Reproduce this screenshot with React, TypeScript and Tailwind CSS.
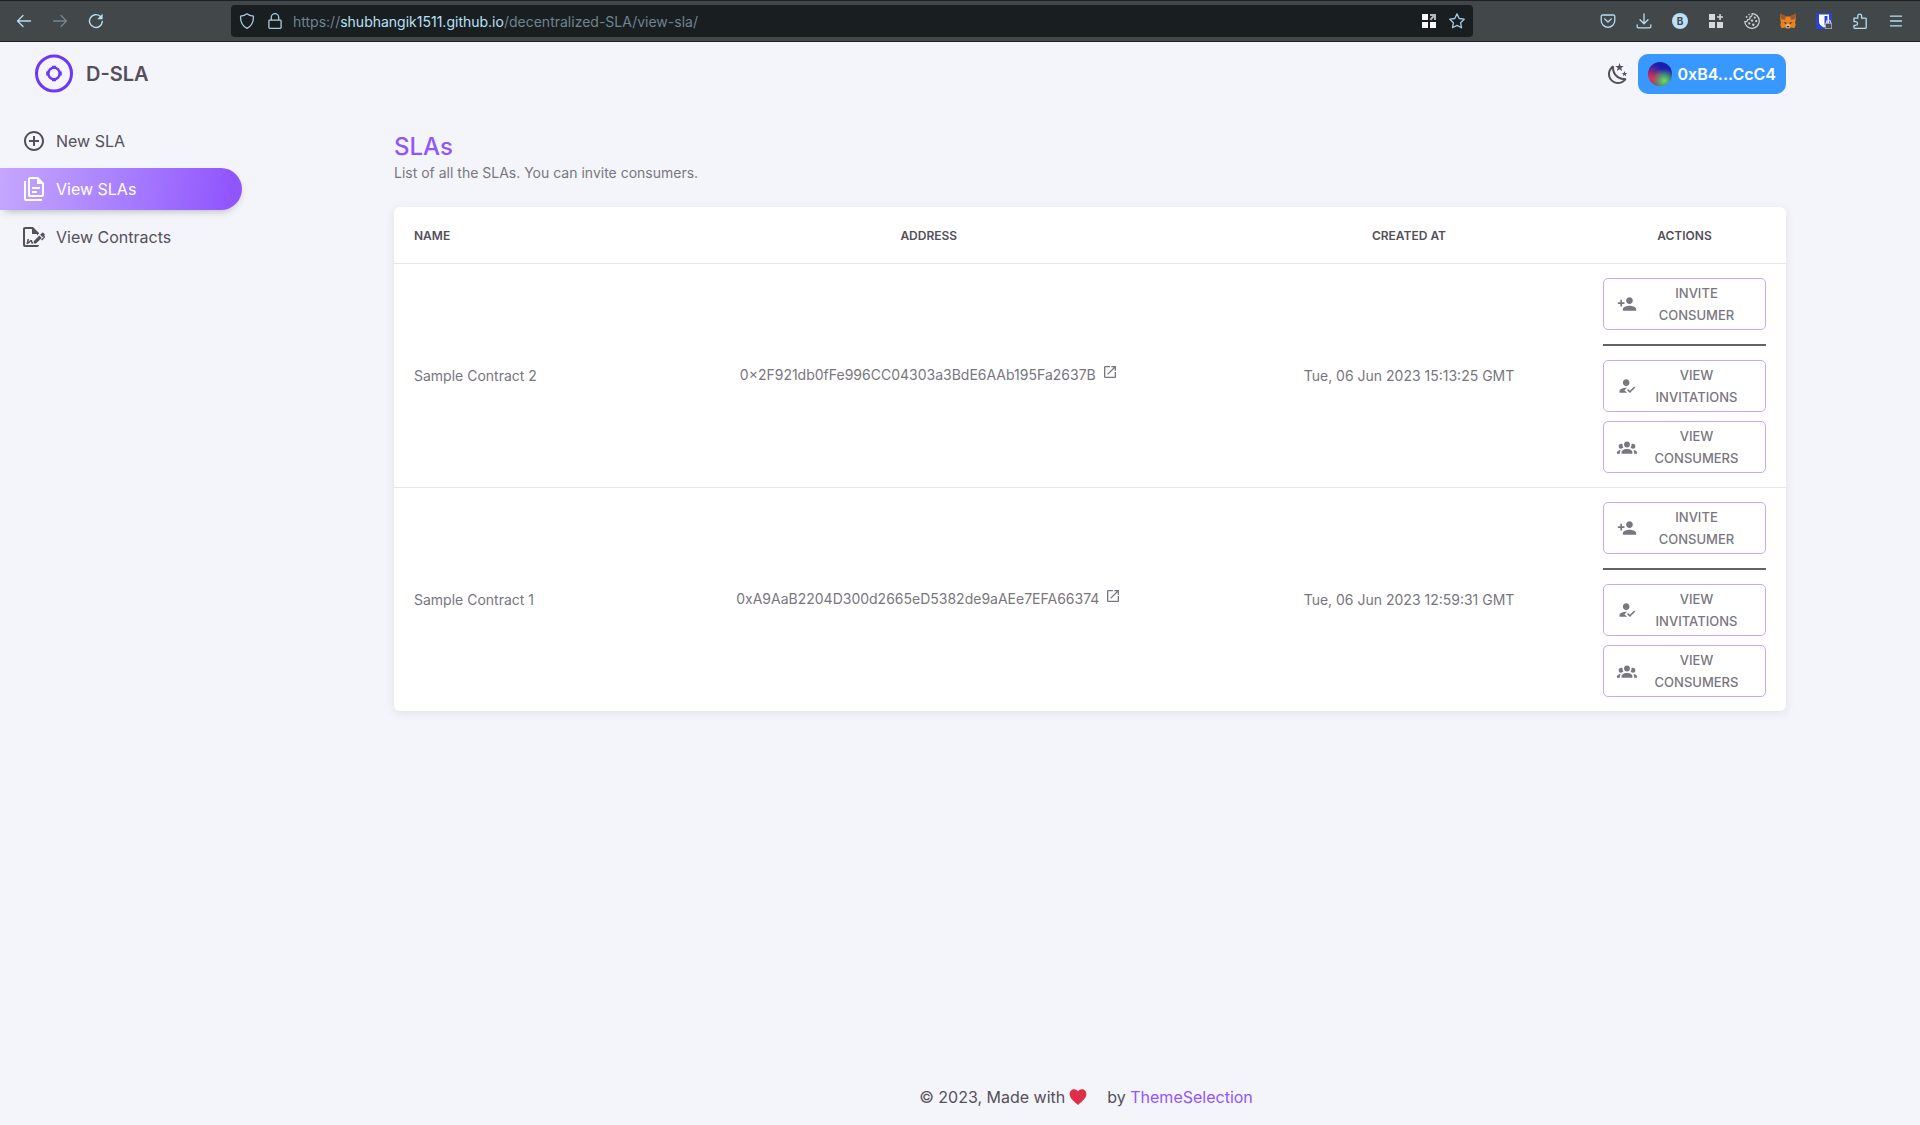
import type { ReactNode } from "react";
import { MdAddCircleOutline, MdHowToReg, MdOpenInNew, MdPersonAdd } from "react-icons/md";

function Svg({ children, size = 24, box = "0 0 24 24", className = "" }: { children: ReactNode; size?: number; box?: string; className?: string }) {
  return (
    <svg width={size} height={size} viewBox={box} fill="none" className={className} aria-hidden="true">
      {children}
    </svg>
  );
}

function Line({ d, className = "" }: { d: string; className?: string }) {
  return (
    <Svg size={16} box="0 0 16 16" className={className}>
      <path d={d} stroke="currentColor" strokeWidth="1.3" strokeLinecap="round" strokeLinejoin="round" />
    </Svg>
  );
}

function BarButton({ label, children, className = "" }: { label: string; children: ReactNode; className?: string }) {
  return (
    <button type="button" aria-label={label} className={`flex h-8 w-9 shrink-0 items-center justify-center ${className}`}>
      {children}
    </button>
  );
}

function BrowserBar() {
  return (
    <header className="flex h-[42px] shrink-0 items-center border-y border-[#1b2024] bg-[#42474a] text-[#b9def2]">
      <div className="flex w-[231px] shrink-0 pl-1.5">
        <BarButton label="Back"><Line d="M1.5 8h13M7 2.500 1.500 8 7 13.500" /></BarButton>
        <BarButton label="Forward" className="text-[#74858e]"><Line d="M14.500 8h-13M9 2.500 14.500 8 9 13.500" /></BarButton>
        <BarButton label="Reload">
          <Svg size={16} box="0 0 16 16">
            <path d="M14.300 8.500A6.400 6.400 0 1 1 12.200 3.300" stroke="currentColor" strokeWidth="1.4" strokeLinecap="round" />
            <path d="M14.600 .8v5.400H9.200z" fill="currentColor" />
          </Svg>
        </BarButton>
      </div>
      <div className="flex h-8 min-w-0 flex-1 items-center rounded-sm bg-[#191e21] pl-2 pr-0.5 text-[#a6cbe0]">
        <Line d="M8 .8c2 1.600 4 2.100 6.400 2.400C14.700 9 13 13 8 15.300 3 13 1.300 9 1.600 3.200 4 2.900 6 2.400 8 .8z" />
        <span className="ml-3 flex"><Line d="M2.700 7.200h10.600a.8.8 0 0 1 .8.8v6.500a.8.8 0 0 1-.8.8H2.700a.8.8 0 0 1-.8-.8V8a.8.8 0 0 1 .8-.8zM4.300 7V4.300a3.700 3.700 0 0 1 7.400 0V7" /></span>
        <div className="ml-2.5 min-w-0 flex-1 truncate font-[Inter,sans-serif] text-[14px] text-[#70848f]">
          https://<span className="text-[#b9e2f8]">shubhangik1511.github.io</span>/decentralized-SLA/view-sla/
        </div>
        <button type="button" aria-label="Open in container" className="flex w-7 justify-center">
          <Svg size={16} box="0 0 16 16">
            <path d="M1 1h6v6H1zM1 9h6v6H1zM9 9h6v6H9z" fill="#fff" />
            <path d="M9 1h6v6h-2V4.500L10 7.500 8.500 6l3-3H9z" fill="#b5b8ba" />
          </Svg>
        </button>
        <button type="button" aria-label="Bookmark" className="flex w-7 justify-center">
          <Line d="m8 .9 2.200 4.600 5 .7-3.600 3.500.9 5.100L8 12.400l-4.500 2.400.9-5.100L.8 6.200l5-.7z" />
        </button>
      </div>
      <div className="flex w-[447px] shrink-0 justify-end pr-1.5">
        <BarButton label="Save to Pocket">
          <Line d="M2.500 2h11a1.300 1.300 0 0 1 1.300 1.300v4.200a6.800 6.800 0 0 1-13.600 0V3.300A1.300 1.300 0 0 1 2.500 2zM4.800 6 8 9.100 11.200 6" />
        </BarButton>
        <BarButton label="Downloads"><Line d="M8 .8v9.700M4 6.700l4 4 4-4M1.200 12v1.600a1.200 1.200 0 0 0 1.200 1.200h11.200a1.200 1.200 0 0 0 1.200-1.200V12" /></BarButton>
        <BarButton label="Account">
          <span className="flex size-4 items-center justify-center rounded-full bg-[#b9e2f8] text-[10px] font-bold text-[#42474a]">B</span>
        </BarButton>
        <BarButton label="Widgets">
          <Svg size={16} box="0 0 16 16">
            <path d="M1 1h6v6H1zM1 9h6v6H1zM9 9h6v6H9zM11.300 1h1.500v2.200H15v1.500h-2.200V7h-1.500V4.700H9V3.200h2.300z" fill="#d6d8d9" />
          </Svg>
        </BarButton>
        <BarButton label="Cookies">
          <Svg size={16} box="0 0 16 16">
            <path d="M8 .7a7.300 7.300 0 1 1-7.300 7.800c1.500.6 3-.2 2.800-1.800C5.500 6.900 6.500 5.500 5.800 4 7.500 3.800 8.500 2.500 8 .7z" stroke="#cfd2d3" strokeWidth="1.200" strokeLinejoin="round" />
            <g fill="#cfd2d3">
              <circle cx="10.800" cy="4.600" r="1.100" />
              <circle cx="8" cy="7.600" r="1.200" />
              <circle cx="12.200" cy="8.200" r="1.100" />
              <circle cx="5.300" cy="10.400" r="1.100" />
              <circle cx="9.300" cy="11.700" r="1.200" />
              <circle cx="2.600" cy="4" r=".9" />
              <circle cx="5" cy="1.600" r=".8" />
            </g>
          </Svg>
        </BarButton>
        <BarButton label="MetaMask">
          <Svg size={16} box="0 0 16 16">
            <path d="M.6.8 6 3.500h4L15.400.8l.4 4.700-.7 4.200.6 2.600-1.400 2.900-3.300-.8L9.500 15.500h-3L5 14.400l-3.300.8L.3 12.300l.6-2.600L.2 5.500z" fill="#e8821e" />
            <path d="M.6.8 6 3.500 4.800 7 .9 6zM15.400.8 10 3.500 11.200 7l3.900-1z" fill="#a1552b" />
            <path d="m3.500 9 3 .8-.4 1.700zM12.500 9l-3 .8.4 1.700z" fill="#3b2a20" />
            <path d="m5.500 12 2.500-.8 2.500.8-.8 3H6.300z" fill="#d9c3ae" />
            <path d="M6.500 13h3l-.5 1.200H7z" fill="#2c2622" />
          </Svg>
        </BarButton>
        <BarButton label="Bitwarden">
          <Svg size={16} box="0 0 16 16">
            <rect width="16" height="16" rx="1" fill="#2a43d8" />
            <path d="M3 1.500h10V9c0 2.500-2.500 4.300-5 5.500C5.500 13.300 3 11.500 3 9z" fill="#fff" />
            <path d="M8.500 3v9.500c1.700-1 3-2.200 3-3.700V3z" fill="#2a43d8" />
            <path d="M10.500 10.500V9a2 2 0 0 1 4 0v1.500" stroke="#d4d4d4" strokeWidth="1.200" />
            <path d="M9.300 10.300h6.400v5.400H9.300z" fill="#4b4f52" stroke="#d4d4d4" strokeWidth=".7" />
          </Svg>
        </BarButton>
        <BarButton label="Extensions">
          <Line d="M2 5.200h3.800V3a1.900 1.900 0 0 1 3.800 0v2.200h3.800a.8.8 0 0 1 .8.800v8.500a.8.8 0 0 1-.8.800H2.800a.8.8 0 0 1-.8-.8v-2.200h1.700a1.800 1.800 0 0 0 0-3.700H2z" />
        </BarButton>
        <BarButton label="Menu"><Line d="M2.500 3.200h11M2.500 8h11M2.500 12.800h11" /></BarButton>
      </div>
    </header>
  );
}

const DOCS =
  "M16 0H8C6.900 0 6 .9 6 2V18C6 19.100 6.900 20 8 20H20C21.100 20 22 19.100 22 18V6L16 0M20 18H8V2H15V7H20V18M4 4V22H20V24H4C2.900 24 2 23.100 2 22V4H4M10 10V12H18V10H10M10 14V16H15V14H10Z";
const SIGN =
  "M19.7 12.9L14 18.6H11.7V16.3L17.4 10.6L19.7 12.9M23.1 12.1C23.1 12.4 22.8 12.7 22.5 13L20 15.5L19.1 14.6L21.7 12L21.1 11.4L20.4 12.1L18.1 9.8L20.3 7.7C20.5 7.5 20.9 7.5 21.2 7.7L22.6 9.1C22.8 9.3 22.8 9.7 22.6 10C22.4 10.2 22.2 10.4 22.2 10.6C22.2 10.8 22.4 11 22.6 11.2C22.9 11.5 23.2 11.8 23.1 12.1M3 20V4H10V9H15V10.5L17 8.5V8L11 2H3C1.9 2 1 2.9 1 4V20C1 21.1 1.9 22 3 22H15C16.1 22 17 21.1 17 20H3M11 17.1C10.8 17.1 10.6 17.2 10.5 17.2L10 15H8.5L6.4 16.7L7 14H5.5L4.5 19H6L8.9 16.4L9.5 18.7H10.5L11 18.6V17.1Z";
const NIGHT =
  "M17.75,4.09L15.22,6.03L16.13,9.09L13.5,7.28L10.87,9.09L11.78,6.03L9.25,4.09L12.44,4L13.5,1L14.56,4L17.75,4.09M21.25,11L19.61,12.25L20.2,14.23L18.5,13.06L16.8,14.23L17.39,12.25L15.75,11L17.81,10.95L18.5,9L19.19,10.95L21.25,11M18.97,15.95C19.8,15.87 20.69,17.05 20.16,17.8C19.84,18.25 19.5,18.67 19.08,19.07C15.17,23 8.84,23 4.94,19.07C1.03,15.17 1.03,8.83 4.94,4.93C5.34,4.53 5.76,4.17 6.21,3.85C6.96,3.32 8.14,4.21 8.06,5.04C7.79,7.9 8.75,10.87 10.95,13.06C13.14,15.26 16.1,16.22 18.97,15.95M17.33,17.97C14.5,17.81 11.7,16.64 9.53,14.5C7.36,12.31 6.2,9.5 6.04,6.68C3.23,9.82 3.34,14.64 6.35,17.66C9.37,20.67 14.19,20.78 17.33,17.97Z";
const GROUP =
  "M12,5.5A3.5,3.5 0 0,1 15.5,9A3.5,3.5 0 0,1 12,12.5A3.5,3.5 0 0,1 8.5,9A3.5,3.5 0 0,1 12,5.5M5,8C5.56,8 6.08,8.15 6.53,8.42C6.38,9.85 6.8,11.27 7.66,12.38C7.16,13.34 6.16,14 5,14A3,3 0 0,1 2,11A3,3 0 0,1 5,8M19,8A3,3 0 0,1 22,11A3,3 0 0,1 19,14C17.84,14 16.84,13.34 16.34,12.38C17.2,11.27 17.62,9.85 17.47,8.42C17.92,8.15 18.44,8 19,8M5.5,18.25C5.5,16.18 8.41,14.5 12,14.5C15.59,14.5 18.5,16.18 18.5,18.25V20H5.5V18.25M0,20V18.5C0,17.11 1.89,15.94 4.45,15.6C3.86,16.28 3.5,17.22 3.5,18.25V20H0M24,20H20.5V18.25C20.5,17.22 20.14,16.28 19.55,15.6C22.11,15.94 24,17.11 24,18.5V20Z";

function NavItem({ icon, label, active = false }: { icon: ReactNode; label: string; active?: boolean }) {
  return (
    <li>
      <a
        href="#"
        aria-current={active ? "page" : undefined}
        className={`flex h-[42px] items-center gap-2.5 rounded-r-full pl-[22px] ${
          active ? "bg-linear-98 from-[#c6a7fe] to-[#9155fd] to-94% text-white shadow-[0_4px_8px_-4px_rgba(58,53,65,0.42)]" : ""
        }`}
      >
        {icon}
        {label}
      </a>
    </li>
  );
}

function Sidebar() {
  return (
    <aside className="w-[260px] shrink-0">
      <a href="#" className="flex h-16 items-center gap-3 pl-[34px] text-xl font-semibold">
        <Svg size={40} box="0 0 40 40">
          <circle cx="20" cy="19.500" r="17.500" stroke="#6b38fb" strokeWidth="3" />
          <circle cx="20" cy="19.500" r="5.700" stroke="#6b38fb" strokeWidth="2.500" />
          <path d="M18 11.700h4v3h-4zM18 24.300h4v3h-4zM12.200 17.500h3v4h-3zM24.800 17.500h3v4h-3z" fill="#6b38fb" />
        </Svg>
        D-SLA
      </a>
      <nav>
        <ul className="flex flex-col gap-1.5 pr-[18px] pt-3.5">
          <NavItem icon={<MdAddCircleOutline size={24} />} label="New SLA" />
          <NavItem active icon={<Svg><path d={DOCS} fill="currentColor" /></Svg>} label="View SLAs" />
          <NavItem icon={<Svg><path d={SIGN} fill="currentColor" /></Svg>} label="View Contracts" />
        </ul>
      </nav>
    </aside>
  );
}

function ActionButton({ icon, label }: { icon: ReactNode; label: string }) {
  return (
    <button
      type="button"
      className="flex h-[52px] w-full items-center gap-1 rounded-[5px] border border-[#c6a7fe] px-[13px] text-[13px] leading-[22px] font-medium uppercase"
    >
      <span className="shrink-0">{icon}</span>
      <span className="min-w-0 flex-1 text-center">{label}</span>
    </button>
  );
}

const rows = [
  { name: "Sample Contract 2", address: "0×2F921db0fFe996CC04303a3BdE6AAb195Fa2637B", created: "Tue, 06 Jun 2023 15:13:25 GMT" },
  { name: "Sample Contract 1", address: "0xA9AaB2204D300d2665eD5382de9aAEe7EFA66374", created: "Tue, 06 Jun 2023 12:59:31 GMT" },
];

function SlaTable() {
  return (
    <div className="overflow-hidden rounded-md bg-white shadow-[0_2px_10px_rgba(58,53,65,0.1)]">
      <table className="w-full table-fixed text-center text-sm text-[#797680]">
        <thead className="text-xs text-[#544f5a] uppercase">
          <tr className="h-14 border-b border-[#e7e6e8]">
            <th scope="col" className="px-5 pt-0.5 text-left font-semibold">Name</th>
            <th scope="col" className="w-[44%] px-5 pt-0.5 font-semibold">Address</th>
            <th scope="col" className="w-[25%] px-5 pt-0.5 font-semibold">Created At</th>
            <th scope="col" className="w-[203px] px-5 pt-0.5 font-semibold">Actions</th>
          </tr>
        </thead>
        <tbody>
          {rows.map((row) => (
            <tr key={row.name} className="border-b border-[#e7e6e8] last:border-b-0">
              <td className="px-5 pt-0.5 text-left">{row.name}</td>
              <td className="px-5 pt-0.5">
                {row.address}
                <a href="#" aria-label="Open in explorer" className="ml-1.5 inline-block pb-2 align-middle">
                  <MdOpenInNew size={16} />
                </a>
              </td>
              <td className="px-5 pt-0.5">{row.created}</td>
              <td className="px-5 py-3.5">
                <ActionButton icon={<MdPersonAdd size={20} />} label="Invite Consumer" />
                <hr className="my-3.5 border-t-2 border-[#656168]" />
                <ActionButton icon={<MdHowToReg size={20} />} label="View Invitations" />
                <div className="h-[9px]" />
                <ActionButton icon={<Svg size={20}><path d={GROUP} fill="currentColor" /></Svg>} label="View Consumers" />
              </td>
            </tr>
          ))}
        </tbody>
      </table>
    </div>
  );
}

export default function App() {
  return (
    <div className="flex min-h-screen flex-col bg-[#f4f5fa] font-[Inter,sans-serif] text-[#544f5a]">
      <BrowserBar />
      <div className="flex flex-1">
        <Sidebar />
        <div className="flex min-w-0 flex-1 justify-center">
          <div className="flex w-full max-w-[1440px] flex-col px-6">
            <div className="flex h-16 items-center justify-end gap-2">
              <button type="button" aria-label="Dark mode">
                <Svg><path d={NIGHT} fill="currentColor" /></Svg>
              </button>
              <button type="button" className="flex h-10 items-center gap-1.5 rounded-[10px] bg-[#3898ff] px-2.5 text-base font-semibold text-white">
                <span className="size-6 rounded-full bg-[radial-gradient(circle_at_68%_78%,#68e15a_0%,transparent_50%),radial-gradient(circle_at_10%_70%,#f0304a_0%,transparent_55%),linear-gradient(#1a1fb0_35%,#2a3f8f)]" />
                0xB4...CcC4
              </button>
            </div>
            <main className="flex-1 pt-[25px]">
              <h1 className="text-2xl leading-8 font-medium text-[#9155fd]">SLAs</h1>
              <p className="mb-6 text-sm leading-5 text-[#797680]">List of all the SLAs. You can invite consumers.</p>
              <SlaTable />
            </main>
            <footer className="flex h-14 items-center justify-center pr-2">
              <span>© 2023, Made with</span>
              <Svg size={18} className="mx-1">
                <path d="M12 22.500C6 17.500.8 13 .8 7.900.8 4.300 3.500 1.500 6.800 1.500c2.100 0 4 1.100 5.200 2.900 1.200-1.800 3.100-2.900 5.200-2.900 3.300 0 6 2.800 6 6.400 0 5.100-5.200 9.600-11.200 14.600z" fill="#df2e46" />
              </Svg>
              <span className="ml-4">by{" "}<a href="#" className="text-[#9155fd]">ThemeSelection</a></span>
            </footer>
          </div>
        </div>
      </div>
    </div>
  );
}
